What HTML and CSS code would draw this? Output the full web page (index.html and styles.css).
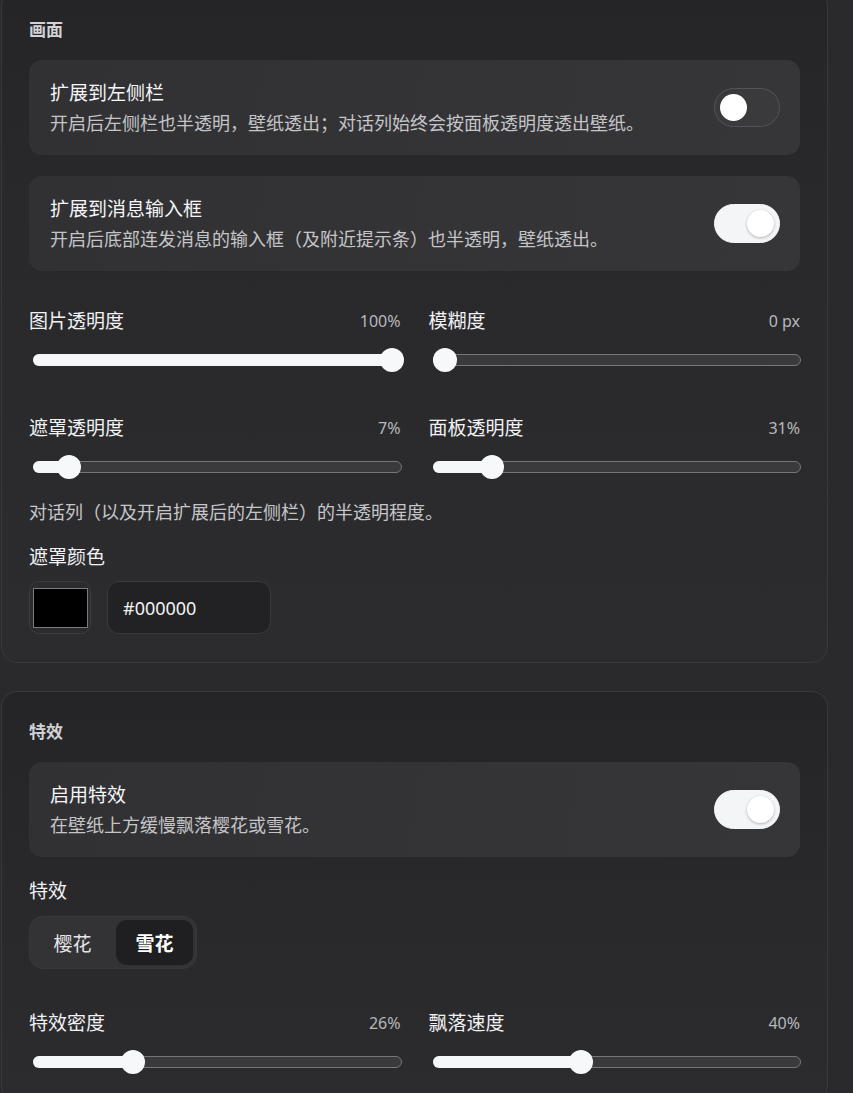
FILE: index.html
```html
<!DOCTYPE html>
<html lang="zh-CN">
<head>
<meta charset="utf-8">
<title>设置</title>
<link rel="stylesheet" href="styles.css">
</head>
<body>
<div class="page">
  <section class="panel">
    <h2 class="panel-title">画面</h2>
    <div class="cards">
      <div class="card">
        <div class="card-text">
          <div class="card-title">扩展到左侧栏</div>
          <div class="card-desc">开启后左侧栏也半透明，壁纸透出；对话列始终会按面板透明度透出壁纸。</div>
        </div>
        <div class="toggle"><span class="knob"></span></div>
      </div>
      <div class="card">
        <div class="card-text">
          <div class="card-title">扩展到消息输入框</div>
          <div class="card-desc">开启后底部连发消息的输入框（及附近提示条）也半透明，壁纸透出。</div>
        </div>
        <div class="toggle on"><span class="knob"></span></div>
      </div>
    </div>

    <div class="sliders">
      <div class="slider">
        <div class="slider-head"><span class="slider-label">图片透明度</span><span class="slider-value">100%</span></div>
        <div class="track-box"><div class="track" style="--p:1"><div class="fill"></div><div class="thumb"></div></div></div>
      </div>
      <div class="slider">
        <div class="slider-head"><span class="slider-label">模糊度</span><span class="slider-value">0 px</span></div>
        <div class="track-box"><div class="track" style="--p:0"><div class="fill"></div><div class="thumb"></div></div></div>
      </div>
      <div class="slider">
        <div class="slider-head"><span class="slider-label">遮罩透明度</span><span class="slider-value">7%</span></div>
        <div class="track-box"><div class="track" style="--p:0.07"><div class="fill"></div><div class="thumb"></div></div></div>
      </div>
      <div class="slider">
        <div class="slider-head"><span class="slider-label">面板透明度</span><span class="slider-value">31%</span></div>
        <div class="track-box"><div class="track" style="--p:0.138"><div class="fill"></div><div class="thumb"></div></div></div>
      </div>
    </div>

    <p class="note">对话列（以及开启扩展后的左侧栏）的半透明程度。</p>

    <div class="field-label mask-label">遮罩颜色</div>
    <div class="color-row">
      <div class="swatch"><span class="swatch-inner"></span></div>
      <div class="hex-input">#000000</div>
    </div>
  </section>

  <section class="panel">
    <h2 class="panel-title">特效</h2>
    <div class="cards">
      <div class="card">
        <div class="card-text">
          <div class="card-title">启用特效</div>
          <div class="card-desc">在壁纸上方缓慢飘落樱花或雪花。</div>
        </div>
        <div class="toggle on"><span class="knob"></span></div>
      </div>
    </div>

    <div class="field-label effect-label">特效</div>
    <div class="segmented">
      <span class="seg">樱花</span>
      <span class="seg active">雪花</span>
    </div>

    <div class="sliders fx-sliders">
      <div class="slider">
        <div class="slider-head"><span class="slider-label">特效密度</span><span class="slider-value">26%</span></div>
        <div class="track-box"><div class="track" style="--p:0.254"><div class="fill"></div><div class="thumb"></div></div></div>
      </div>
      <div class="slider">
        <div class="slider-head"><span class="slider-label">飘落速度</span><span class="slider-value">40%</span></div>
        <div class="track-box"><div class="track" style="--p:0.394"><div class="fill"></div><div class="thumb"></div></div></div>
      </div>
    </div>
  </section>
</div>
</body>
</html>
```

FILE: styles.css
```css
* { box-sizing: border-box; }

html, body {
  margin: 0;
  padding: 0;
}

body {
  background: #2a2a2d;
  color: #f1f1f3;
  font-family: "Noto Sans", "Noto Sans CJK SC", sans-serif;
  overflow: hidden;
}

.page {
  margin-top: -11px;
  padding: 0 25px 40px 1px;
  display: flex;
  flex-direction: column;
  gap: 28px;
}

.panel {
  display: flex;
  flex-direction: column;
  border: 1px solid #39393c;
  border-radius: 16px;
  padding: 28px 27px 28px 27px;
  background: linear-gradient(180deg, #252527 0px, #29292c 220px, #2c2c2f 100%);
}

.panel-title {
  margin: 0 0 18px 0;
  font-size: 17px;
  line-height: 24px;
  font-weight: 700;
  color: #d2d2d6;
}

.cards {
  display: flex;
  flex-direction: column;
  gap: 21px;
}

.card {
  display: flex;
  align-items: center;
  justify-content: space-between;
  height: 95px;
  padding: 0 20px 0 21px;
  border-radius: 13px;
  background: linear-gradient(100deg, #313134 0%, #343437 60%, #363639 100%);
}

.card-text {
  display: flex;
  flex-direction: column;
  padding-top: 2px;
}

.card-title {
  font-size: 19px;
  line-height: 29px;
  font-weight: 400;
  color: #f6f6f8;
}

.card-desc {
  font-size: 18px;
  line-height: 31px;
  color: #c5c5c8;
}

.toggle {
  position: relative;
  flex: none;
  width: 66px;
  height: 39px;
  border-radius: 20px;
  background: #3a3a3d;
  border: 1px solid #545457;
}

.toggle .knob {
  position: absolute;
  top: 5px;
  left: 5px;
  width: 27px;
  height: 27px;
  border-radius: 50%;
  background: #ffffff;
}

.toggle.on {
  background: #f4f5f7;
  border-color: #f4f5f7;
}

.toggle.on .knob {
  left: auto;
  right: 5px;
  box-shadow: 0 1px 3px rgba(0, 0, 0, 0.28);
}

.sliders {
  margin-top: 36px;
  display: grid;
  grid-template-columns: 1fr 1fr;
  column-gap: 28px;
  row-gap: 42px;
}

.fx-sliders {
  margin-top: 40px;
}

.slider-head {
  display: flex;
  justify-content: space-between;
  align-items: center;
  height: 28px;
}

.slider-label {
  font-size: 19px;
  line-height: 28px;
  color: #f2f2f4;
}

.slider-value {
  font-size: 16px;
  line-height: 28px;
  color: #b8b8bb;
}

.track-box {
  margin-top: 13px;
  height: 24px;
  display: flex;
  align-items: center;
  padding-left: 4px;
  margin-right: -1px;
}

.track {
  position: relative;
  width: 100%;
  height: 12px;
  border-radius: 6px;
  background: #3a3a3d;
  border: 1px solid #767679;
}

.fill {
  position: absolute;
  left: -1px;
  top: -1px;
  bottom: -1px;
  width: calc(var(--p) * (100% - 20px) + 12px);
  border-radius: 6px;
  background: #f6f7f9;
}

.thumb {
  position: absolute;
  top: 50%;
  left: calc(var(--p) * (100% - 20px) - 1px);
  width: 24px;
  height: 24px;
  margin-top: -12px;
  border-radius: 50%;
  background: #f7f8fa;
}

.note {
  margin: 19px 0 0 0;
  font-size: 18px;
  line-height: 28px;
  color: #c6c6c9;
}

.field-label {
  font-size: 19px;
  line-height: 28px;
  color: #f2f2f4;
}

.mask-label {
  margin-top: 17px;
}

.effect-label {
  margin-top: 20px;
}

.color-row {
  margin-top: 10px;
  display: flex;
  gap: 16px;
}

.swatch {
  width: 62px;
  height: 53px;
  border: 1px solid #3c3c3f;
  border-radius: 10px;
  padding: 6px 2px 5px 3px;
  display: flex;
}

.swatch-inner {
  flex: 1;
  background: #000000;
  border: 1px solid #7a7a7c;
}

.hex-input {
  width: 164px;
  height: 53px;
  border: 1px solid #3a3a3d;
  border-radius: 12px;
  background: #222225;
  padding-left: 15px;
  display: flex;
  align-items: center;
  font-size: 18px;
  color: #f2f2f4;
}

.segmented {
  margin-top: 11px;
  display: inline-flex;
  align-self: flex-start;
  padding: 3px;
  border-radius: 14px;
  background: #333336;
  border: 1px solid #38383b;
  width: 168px;
  height: 53px;
  gap: 4px;
}

.seg {
  flex: none;
  width: 79px;
  height: 45px;
  display: flex;
  align-items: center;
  justify-content: center;
  font-size: 19px;
  color: #e6e6e9;
  border-radius: 11px;
}

.seg.active {
  width: 77px;
  background: #1f1f22;
  color: #ffffff;
  font-weight: 700;
}
```
